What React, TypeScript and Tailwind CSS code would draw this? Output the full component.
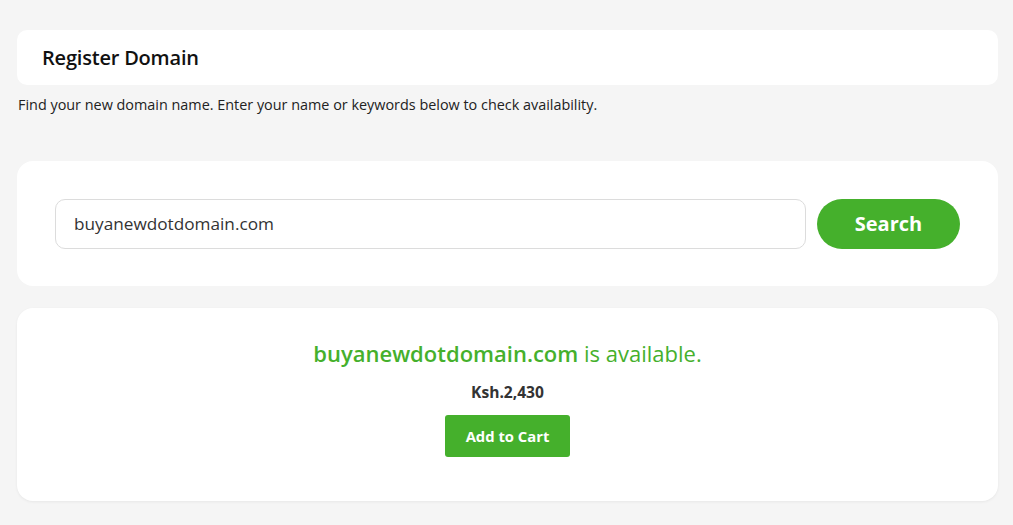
import { useState } from "react";

const DOMAIN = "buyanewdotdomain.com";

export default function App() {
  const [query, setQuery] = useState(DOMAIN);

  return (
    <div
      className="min-h-screen bg-[#f5f5f5] pl-[17px] pr-[15px] pt-[30px] pb-6 text-[#222]"
      style={{ fontFamily: "'Open Sans', Lato, Arial, sans-serif" }}
    >
      <div className="h-[55px] rounded-[10px] bg-white px-[25px] flex items-center">
        <h1 className="text-[20px] font-semibold tracking-[-0.2px] text-[#111]">Register Domain</h1>
      </div>
      <p className="mt-[10px] ml-px h-[20px] leading-[20px] text-[14.4px] text-[#222]">
        Find your new domain name. Enter your name or keywords below to check availability.
      </p>

      <div className="mt-[46px] h-[125px] rounded-[16px] bg-white pl-[38px] pr-[38px] flex items-center gap-[11px]">
        <input
          value={query}
          onChange={(e) => setQuery(e.target.value)}
          className="h-[50px] flex-1 rounded-[10px] border border-[#dcdcdc] px-[18px] text-[17.2px] text-[#333] outline-none"
        />
        <button className="h-[50px] w-[143px] rounded-full bg-[#45b02c] text-[20px] font-bold text-white">
          Search
        </button>
      </div>

      <div className="mt-[22px] h-[193px] rounded-[16px] bg-white shadow-[0_1px_3px_rgba(0,0,0,0.06)] flex flex-col items-center pt-[30px]">
        <div className="text-[22px] leading-[30px] text-[#45b02c]">
          <span className="font-semibold">{DOMAIN}</span> is available.
        </div>
        <div className="mt-[13px] text-[15.6px] font-bold text-[#333]">Ksh.2,430</div>
        <button className="mt-[11px] h-[42px] w-[125px] rounded-[3px] bg-[#45b02c] text-[14.8px] font-bold text-white">
          Add to Cart
        </button>
      </div>
    </div>
  );
}
